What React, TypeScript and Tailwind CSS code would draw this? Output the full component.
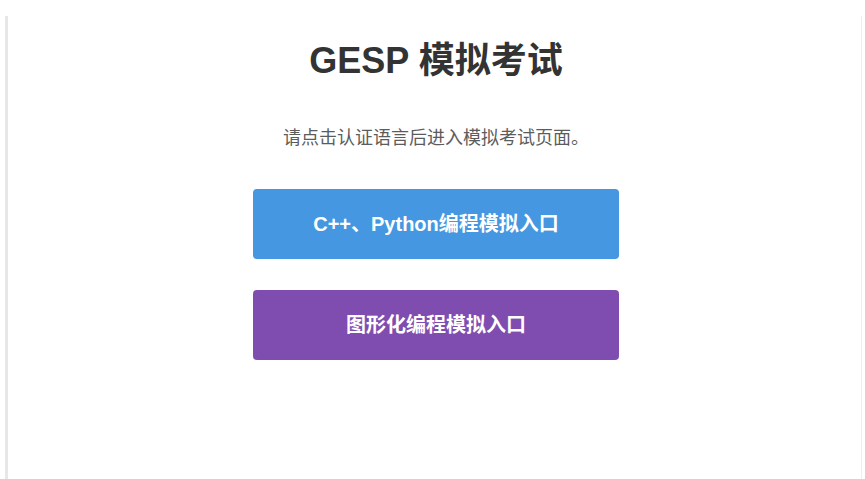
const entries = [
  { label: "C++、Python编程模拟入口", color: "bg-[#4497e0]" },
  { label: "图形化编程模拟入口", color: "bg-[#7f4db0]" },
];

export default function App() {
  return (
    <div
      className="min-h-screen bg-white pt-4 pl-[5px] pr-[3px]"
      style={{ fontFamily: '"Liberation Sans", Arial, "Noto Sans CJK SC", sans-serif' }}
    >
      <div className="h-[463px] border-l-[3px] border-r border-l-[#e7e7e7] border-r-[#eeeeee] bg-white">
        <div className="flex flex-col items-center pl-[3px] pt-[23px]">
          {/* Title */}
          <h1 className="text-[36px] font-bold leading-[43px] text-[#333333]">
            GESP 模拟考试
          </h1>

          <p className="mt-[43px] text-[18px] leading-[27px] text-[#5c5c5c]">
            请点击认证语言后进入模拟考试页面。
          </p>

          {/* Entry buttons */}
          <div className="mt-[37px] flex flex-col gap-[31px]">
            {entries.map((entry) => (
              <button
                key={entry.label}
                className={`flex h-[70px] w-[366px] items-center justify-center rounded ${entry.color} text-[20px] font-bold text-white`}
              >
                {entry.label}
              </button>
            ))}
          </div>
        </div>
      </div>
    </div>
  );
}
